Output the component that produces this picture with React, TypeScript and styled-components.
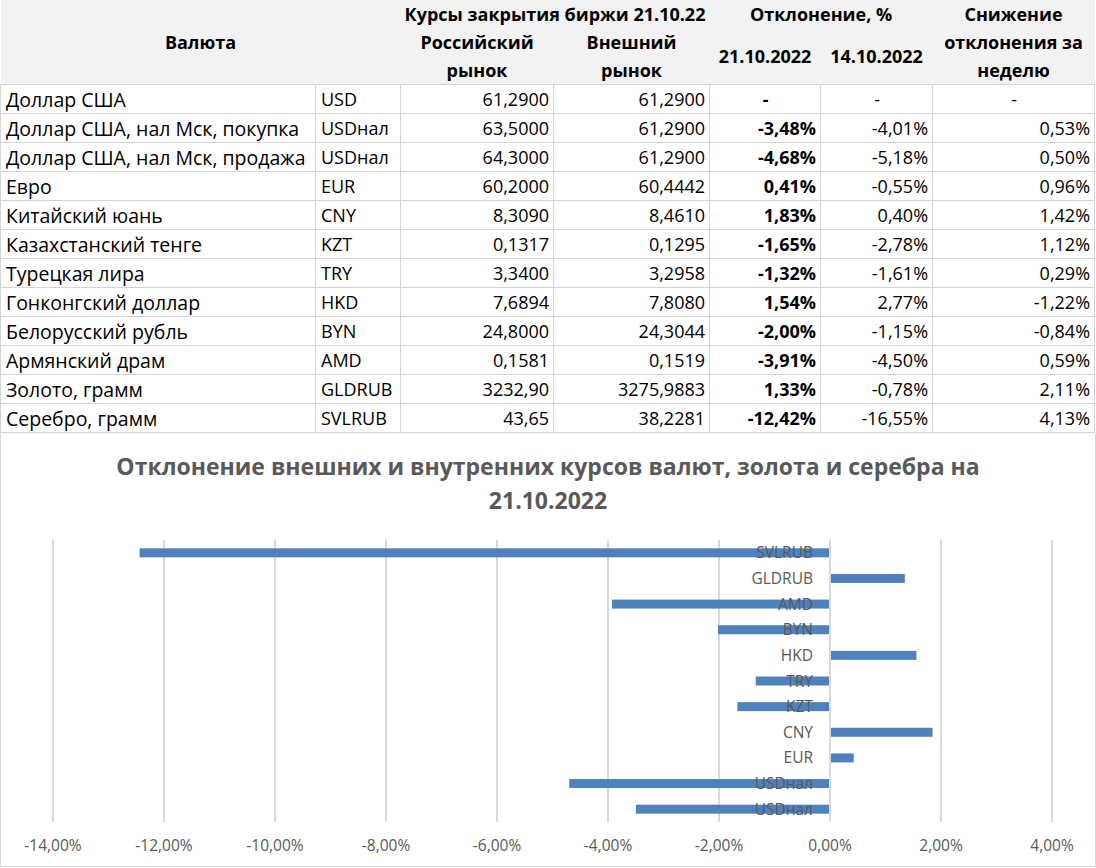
import React from "react";
import styled, { createGlobalStyle } from "styled-components";

const GlobalStyle = createGlobalStyle`
  html, body { margin: 0; padding: 0; background: #ffffff; }
  body { font-family: "Open Sans", "Noto Sans", sans-serif; color: #000; }
`;

const Page = styled.div`
  width: 1096px;
  height: 868px;
  overflow: hidden;
  background: #fff;
`;

const Table = styled.table`
  width: 1094px;
  border-collapse: collapse;
  table-layout: fixed;
  font-size: 18px;
`;

const HeadCell = styled.th<{ $lh?: number }>`
  background: #f2f2f2;
  font-weight: 700;
  text-align: center;
  vertical-align: middle;
  padding: 0 4px;
  line-height: ${(p) => p.$lh ?? 28}px;
  white-space: normal;
`;

const HeadRow = styled.tr<{ $h: number }>`
  height: ${(p) => p.$h}px;
`;

const Row = styled.tr`
  height: 29px;
`;

const Cell = styled.td<{ $align?: string; $bold?: boolean; $text?: boolean }>`
  border: 1px solid #d4d4d4;
  padding: 0 4px 0 5px;
  height: 28px;
  line-height: 27px;
  text-align: ${(p) => p.$align ?? "left"};
  font-weight: ${(p) => (p.$bold ? 700 : 400)};
  font-size: ${(p) => (p.$text ? 19.5 : 18)}px;
  white-space: nowrap;
  overflow: hidden;
`;

const ChartBox = styled.div`
  width: 1094px;
  height: 433px;
  border: 1px solid #d9d9d9;
  border-top: none;
  box-sizing: content-box;
  display: flex;
  flex-direction: column;
`;

const ChartTitle = styled.div`
  padding: 16px 95px 0;
  text-align: center;
  font-weight: 700;
  font-size: 23px;
  line-height: 34px;
  color: #595959;
`;

const Plot = styled.svg`
  display: block;
  flex: none;
`;

type R = {
  name: string;
  code: string;
  ru: string;
  ext: string;
  d1: string;
  d2: string;
  d3: string;
  v?: number;
};

const rows: R[] = [
  { name: "Доллар США", code: "USD", ru: "61,2900", ext: "61,2900", d1: "-", d2: "-", d3: "-" },
  { name: "Доллар США, нал Мск, покупка", code: "USDнал", ru: "63,5000", ext: "61,2900", d1: "-3,48%", d2: "-4,01%", d3: "0,53%", v: -3.48 },
  { name: "Доллар США, нал Мск, продажа", code: "USDнал", ru: "64,3000", ext: "61,2900", d1: "-4,68%", d2: "-5,18%", d3: "0,50%", v: -4.68 },
  { name: "Евро", code: "EUR", ru: "60,2000", ext: "60,4442", d1: "0,41%", d2: "-0,55%", d3: "0,96%", v: 0.41 },
  { name: "Китайский юань", code: "CNY", ru: "8,3090", ext: "8,4610", d1: "1,83%", d2: "0,40%", d3: "1,42%", v: 1.83 },
  { name: "Казахстанский тенге", code: "KZT", ru: "0,1317", ext: "0,1295", d1: "-1,65%", d2: "-2,78%", d3: "1,12%", v: -1.65 },
  { name: "Турецкая лира", code: "TRY", ru: "3,3400", ext: "3,2958", d1: "-1,32%", d2: "-1,61%", d3: "0,29%", v: -1.32 },
  { name: "Гонконгский доллар", code: "HKD", ru: "7,6894", ext: "7,8080", d1: "1,54%", d2: "2,77%", d3: "-1,22%", v: 1.54 },
  { name: "Белорусский рубль", code: "BYN", ru: "24,8000", ext: "24,3044", d1: "-2,00%", d2: "-1,15%", d3: "-0,84%", v: -2.0 },
  { name: "Армянский драм", code: "AMD", ru: "0,1581", ext: "0,1519", d1: "-3,91%", d2: "-4,50%", d3: "0,59%", v: -3.91 },
  { name: "Золото, грамм", code: "GLDRUB", ru: "3232,90", ext: "3275,9883", d1: "1,33%", d2: "-0,78%", d3: "2,11%", v: 1.33 },
  { name: "Серебро, грамм", code: "SVLRUB", ru: "43,65", ext: "38,2281", d1: "-12,42%", d2: "-16,55%", d3: "4,13%", v: -12.42 },
];

const alignFor = (s: string) => (s === "-" ? "center" : "right");

const PLOT_TOP = 517;
const X0 = 829;
const SCALE = 55.5;
const GRID_TOP = 540 - PLOT_TOP;
const GRID_BOTTOM = 822 - PLOT_TOP;
const ticks = [-14, -12, -10, -8, -6, -4, -2, 0, 2, 4];

const Chart: React.FC = () => {
  const series = rows.filter((r) => r.v !== undefined).reverse();
  const band = (GRID_BOTTOM - GRID_TOP) / series.length;
  return (
    <Plot width={1094} height={349} viewBox="0 0 1094 349">
      {ticks.map((t) => {
        const x = X0 + t * SCALE;
        return (
          <line key={t} x1={x} x2={x} y1={GRID_TOP} y2={GRID_BOTTOM} stroke="#d9d9d9" strokeWidth={2} />
        );
      })}
      {series.map((s, i) => {
        const cy = GRID_TOP + band * (i + 0.5);
        const v = s.v as number;
        const w = Math.abs(v) * SCALE;
        const x = v < 0 ? X0 - 1 - w : X0 + 1;
        return <rect key={i} x={x} y={cy - 4.5} width={w} height={9} fill="#4f81bd" />;
      })}
      {series.map((s, i) => {
        const cy = GRID_TOP + band * (i + 0.5);
        return (
          <text
            key={"l" + i}
            x={812}
            y={cy + 5.5}
            textAnchor="end"
            fontSize={15.5}
            fill="#595959"
            fontFamily='"Open Sans", "Noto Sans", sans-serif'
          >
            {s.code}
          </text>
        );
      })}
      {ticks.map((t) => {
        const x = X0 + t * SCALE;
        const label = (t === 0 ? "0" : t.toString()) + ",00%";
        return (
          <text
            key={"t" + t}
            x={x}
            y={334}
            textAnchor="middle"
            fontSize={15.5}
            fill="#595959"
            fontFamily='"Open Sans", "Noto Sans", sans-serif'
          >
            {label}
          </text>
        );
      })}
    </Plot>
  );
};

export default function App() {
  return (
    <Page>
      <GlobalStyle />
      <Table>
        <colgroup>
          <col style={{ width: 315 }} />
          <col style={{ width: 85 }} />
          <col style={{ width: 153 }} />
          <col style={{ width: 156 }} />
          <col style={{ width: 111 }} />
          <col style={{ width: 112 }} />
          <col style={{ width: 162 }} />
        </colgroup>
        <thead>
          <HeadRow $h={28}>
            <HeadCell rowSpan={2} colSpan={2}>Валюта</HeadCell>
            <HeadCell colSpan={2}>Курсы закрытия биржи 21.10.22</HeadCell>
            <HeadCell colSpan={2}>Отклонение, %</HeadCell>
            <HeadCell rowSpan={2} $lh={28}>Снижение отклонения за неделю</HeadCell>
          </HeadRow>
          <HeadRow $h={56}>
            <HeadCell $lh={28}>Российский рынок</HeadCell>
            <HeadCell $lh={28}>Внешний рынок</HeadCell>
            <HeadCell>21.10.2022</HeadCell>
            <HeadCell>14.10.2022</HeadCell>
          </HeadRow>
        </thead>
        <tbody>
          {rows.map((r, i) => (
            <Row key={i}>
              <Cell $text>{r.name}</Cell>
              <Cell>{r.code}</Cell>
              <Cell $align="right">{r.ru}</Cell>
              <Cell $align="right">{r.ext}</Cell>
              <Cell $align={alignFor(r.d1)} $bold>{r.d1}</Cell>
              <Cell $align={alignFor(r.d2)}>{r.d2}</Cell>
              <Cell $align={alignFor(r.d3)}>{r.d3}</Cell>
            </Row>
          ))}
        </tbody>
      </Table>
      <ChartBox>
        <ChartTitle>
          Отклонение внешних и внутренних курсов валют, золота и серебра на 21.10.2022
        </ChartTitle>
        <Chart />
      </ChartBox>
    </Page>
  );
}
